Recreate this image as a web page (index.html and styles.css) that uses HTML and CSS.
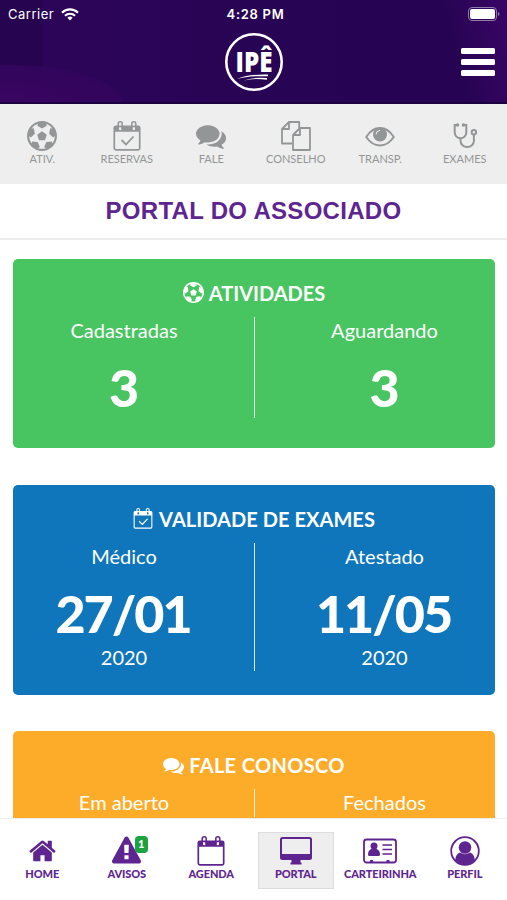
FILE: index.html
```html
<!DOCTYPE html>
<html lang="pt-BR">
<head>
    <meta charset="UTF-8">
    <meta name="viewport" content="width=device-width, initial-scale=1.0">
    <title>Portal do Associado</title>
    <link rel="stylesheet" href="styles.css">
</head>
<body>
    <!-- Icones usados mais de uma vez -->
    <svg class="sprite" width="0" height="0">
        <symbol id="ball" viewBox="0 0 1792 1792">
            <path d="M609 816l287-208 287 208-109 336h-355zm287-816q182 0 348 71t286 191 191 286 71 348-71 348-191 286-286 191-348 71-348-71-286-191-191-286-71-348 71-348 191-286 286-191 348-71zm619 1350q149-203 149-454v-3l-102 89-240-224 63-323 134 12q-150-206-389-282l53 124-287 159-287-159 53-124q-239 76-389 282l135-12 62 323-240 224-102-89v3q0 251 149 454l30-132 326 40 139 298-116 69q117 39 240 39t240-39l-116-69 139-298 326-40z"/>
        </symbol>
        <symbol id="calendar" viewBox="0 0 28 30">
            <rect x="1.300" y="5.300" width="25.400" height="23.500" rx="1.500" fill="none" stroke="currentColor" stroke-width="1.700"/>
            <path d="M1 6.500Q1 5 2.500 5H6v3a1.200 1.200 0 0 0 2.400 0V5h11.200v3a1.200 1.200 0 0 0 2.400 0V5h3.500Q27 5 27 6.500V10.800H1z"/>
            <path d="M5.200 8V2.800a2 2 0 0 1 4 0V8M18.800 8V2.800a2 2 0 0 1 4 0V8" fill="none" stroke="currentColor" stroke-width="1.500"/>
        </symbol>
        <symbol id="calendar-check" viewBox="0 0 28 30">
            <use href="#calendar" width="28" height="30"/>
            <path d="M8.500 19l4.500 4.500 7.500-8" fill="none" stroke="currentColor" stroke-width="1.800"/>
        </symbol>
        <symbol id="comments" viewBox="0 0 1792 1792">
            <path d="M1408 768q0 139-94 257t-256.500 186.500-353.500 68.500q-86 0-176-16-124 88-278 128-36 9-86 16h-3q-11 0-20.500-8t-11.500-21q-1-3-1-6.500t.5-6.500 2-6l2.500-5 3.500-5.500 4-5 4.500-5 4-4.500q5-6 23-25t26-29.500 22.500-29 25-38.500 20.500-44q-124-72-195-177t-71-224q0-139 94-257t256.500-186.500 353.500-68.500 353.500 68.500 256.500 186.500 94 257zm384 256q0 120-71 224.500t-195 176.500q10 24 20.500 44t25 38.500 22.500 29 26 29.500 23 25q1 1 4 4.500t4.500 5 4 5 3.500 5.500l2.500 5 2 6 .5 6.500-1 6.500q-3 14-13 22t-22 7q-50-7-86-16-154-40-278-128-90 16-176 16-271 0-472-132 58 4 88 4 161 0 309-45t264-129q125-92 192-212t67-254q0-77-23-152 129 71 204 178t75 230z"/>
        </symbol>
    </svg>

    <header class="header">
        <div class="status">
            <div class="carrier">
                <span>Carrier</span>
                <svg width="18" height="13" viewBox="0 0 18 13" fill="none" stroke="#fff" stroke-width="2.200">
                    <path d="M1 4.700a11.400 11.400 0 0 1 16 0"/>
                    <path d="M4 7.800a7.100 7.100 0 0 1 10 0"/>
                    <path d="M6.400 9.800a3.700 3.700 0 0 1 5.200 0L9 12.500z" fill="#fff" stroke="none"/>
                </svg>
            </div>
            <span class="time">4:28 PM</span>
            <svg class="battery" width="32" height="14" viewBox="0 0 32 14">
                <rect x=".5" y=".5" width="28" height="13" rx="3.500" fill="none" stroke="#8f7ba8"/>
                <rect x="2" y="2" width="25" height="10" rx="2" fill="#fff"/>
                <path d="M30 5v4q1.500-.5 1.500-2T30 5z" fill="#8f7ba8"/>
            </svg>
        </div>
        <div class="brand">
            <svg class="logo" width="60" height="60" viewBox="0 0 60 60">
                <circle cx="30" cy="30" r="27.700" fill="none" stroke="#fff" stroke-width="2.600"/>
                <text x="30" y="40" text-anchor="middle" textLength="37" lengthAdjust="spacingAndGlyphs">IPÊ</text>
                <path d="M13 47q10-5 31-4.500v1.800Q25 43.500 13 47zM20 48.500q8-3.500 23-2.500v1.800Q30 46 20 48.500z" fill="#fff"/>
            </svg>
            <button class="menu" type="button" aria-label="Menu"><span></span><span></span><span></span></button>
        </div>
    </header>

    <nav class="tabs">
        <a class="tab"><svg width="30" height="30"><use href="#ball"/></svg>ATIV.</a>
        <a class="tab"><svg width="28" height="30"><use href="#calendar-check"/></svg>RESERVAS</a>
        <a class="tab"><svg width="30" height="30"><use href="#comments"/></svg>FALE</a>
        <a class="tab">
            <svg width="30" height="30" viewBox="0 0 30 30" fill="none" stroke="currentColor" stroke-width="1.800" stroke-linejoin="round">
                <path d="M11 22.500H1V8l7-7h10.200v6M8 1v7H1"/>
                <path d="M12 14l7-7h10v22H12zM19 7v7h-7"/>
            </svg>CONSELHO</a>
        <a class="tab">
            <svg width="30" height="30" viewBox="0 0 30 30">
                <path d="M1.200 16Q7 7 15 7t13.800 9Q23 24.500 15 24.500T1.200 16z" fill="none" stroke="currentColor" stroke-width="1.900"/>
                <circle cx="15" cy="13.500" r="7"/>
                <path d="M11 13.500a4 4 0 0 1 4-4" fill="none" stroke="#eee" stroke-width="1"/>
            </svg>TRANSP.</a>
        <a class="tab">
            <svg width="30" height="30" viewBox="0 0 30 30" fill="none" stroke="currentColor" stroke-width="2">
                <path d="M7.500 4H4.700v7.500a5.800 5.800 0 0 0 11.600 0V4H13.500M10.500 17.300v2.500a6.700 6.200 0 0 0 13.400 0V13.500"/>
                <circle cx="23.900" cy="11.300" r="2.200"/>
                <circle cx="7.500" cy="4" r=".8"/>
                <circle cx="13.500" cy="4" r=".8"/>
            </svg>EXAMES</a>
    </nav>

    <h1>PORTAL DO ASSOCIADO</h1>

    <main class="cards">
        <section class="card green">
            <h2><svg width="21" height="21"><use href="#ball"/></svg>ATIVIDADES</h2>
            <div class="row">
                <div class="col">
                    <p>Cadastradas</p>
                    <strong>3</strong>
                </div>
                <div class="col">
                    <p>Aguardando</p>
                    <strong>3</strong>
                </div>
            </div>
        </section>

        <section class="card blue">
            <h2><svg width="20" height="21"><use href="#calendar-check"/></svg>VALIDADE DE EXAMES</h2>
            <div class="row">
                <div class="col">
                    <p>Médico</p>
                    <strong>27/01</strong>
                    <p>2020</p>
                </div>
                <div class="col">
                    <p>Atestado</p>
                    <strong>11/05</strong>
                    <p>2020</p>
                </div>
            </div>
        </section>

        <section class="card orange">
            <h2><svg width="21" height="21"><use href="#comments"/></svg>FALE CONOSCO</h2>
            <div class="row">
                <div class="col">
                    <p>Em aberto</p>
                </div>
                <div class="col">
                    <p>Fechados</p>
                </div>
            </div>
        </section>
    </main>

    <nav class="bottom">
        <a class="item">
            <svg width="29" height="29" viewBox="0 0 1792 1792"><path d="M1472 992v480q0 26-19 45t-45 19h-384v-384h-256v384h-384q-26 0-45-19t-19-45v-480q0-1 .5-3t.5-3l575-474 575 474q1 2 1 6zm223-69l-62 74q-8 9-21 11h-3q-13 0-21-7l-692-577-692 577q-12 8-24 7-13-2-21-11l-62-74q-8-10-7-23.500t11-21.500l719-599q32-26 76-26t76 26l244 204v-195q0-14 9-23t23-9h192q14 0 23 9t9 23v408l219 182q10 8 11 21.500t-7 23.500z"/></svg>
            HOME
        </a>
        <a class="item">
            <svg width="29" height="29" viewBox="0 0 1792 1792"><path d="M1024 1375v-190q0-14-9.500-23.500t-22.500-9.500h-192q-13 0-22.500 9.500t-9.500 23.500v190q0 14 9.500 23.500t22.500 9.500h192q13 0 22.500-9.500t9.500-23.500zm-2-374l18-459q0-12-10-19-13-11-24-11h-220q-11 0-24 11-10 7-10 21l17 457q0 10 10 16.500t24 6.500h185q14 0 23.500-6.500t10.500-16.500zm-14-934l768 1408q35 63-2 126-17 29-46.500 46t-63.500 17h-1536q-34 0-63.500-17t-46.500-46q-37-63-2-126l768-1408q17-31 47-49t65-18 65 18 47 49z"/></svg>
            <span class="badge">1</span>
            AVISOS
        </a>
        <a class="item"><svg width="28" height="30"><use href="#calendar"/></svg>AGENDA</a>
        <a class="item active">
            <svg width="32" height="29" viewBox="0 0 32 29"><path fill-rule="evenodd" d="M2.500.5h27A2.500 2.500 0 0 1 32 3v18a2.500 2.500 0 0 1-2.500 2.500H20.500V26h1v2h-11v-2h1v-2.500h-9A2.500 2.500 0 0 1 0 21V3A2.500 2.500 0 0 1 2.500.5zM2 3.200v14.300h28V3.200a.8.800 0 0 0-.8-.8H2.800a.8.800 0 0 0-.8.800z"/></svg>
            PORTAL
        </a>
        <a class="item">
            <svg width="34" height="29" viewBox="0 0 34 29">
                <rect x="1" y="3" width="32" height="23" rx="2.500" fill="none" stroke="currentColor" stroke-width="1.800"/>
                <circle cx="11" cy="9.500" r="3.500"/>
                <path d="M8.500 12.500h5q3.500 1 3.500 5.500 0 1.500-1.500 1.500h-9Q5 19.500 5 18q0-4.500 3.500-5.500zM7 23.500h3V26H7zM23.500 23.500h3V26h-3z"/>
                <path d="M19.500 8.500h9.500M19.500 13h9.500M19.500 17.500h9.500" fill="none" stroke="currentColor" stroke-width="1.700"/>
            </svg>
            CARTEIRINHA
        </a>
        <a class="item">
            <svg width="30" height="30" viewBox="0 0 30 30">
                <circle cx="15" cy="15" r="13.800" fill="none" stroke="currentColor" stroke-width="1.800"/>
                <circle cx="15" cy="11.500" r="6.300"/>
                <path d="M10 16.500q5 3.500 10 0 4.500 1.500 4.800 7.500a13.500 13.500 0 0 1-19.600 0q.3-6 4.800-7.500z"/>
            </svg>
            PERFIL
        </a>
    </nav>
</body>
</html>
```

FILE: styles.css
```css
* {
    box-sizing: border-box;
}
body {
    display: flex;
    flex-direction: column;
    height: 100vh;
    margin: 0;
    font-family: Lato, "Open Sans", sans-serif;
    background: #fff;
    overflow: hidden;
}
svg {
    flex: none;
}
svg:not([fill]) {
    fill: currentColor;
}
.sprite {
    display: block;
}
h1, h2, p {
    margin: 0;
}
.header {
    height: 104px;
    color: #fff;
    border-bottom: 2px solid #1d0042;
    background:
        radial-gradient(ellipse 125px 40px at 0 104px, #3a0561 0, #32055c 97%, transparent 100%),
        linear-gradient(75deg, transparent 88%, #3a0566 100%),
        linear-gradient(90deg, #27044f 0 41px, #2c0559 44px, #270453 70%);
}
.status {
    display: grid;
    grid-template-columns: 1fr auto 1fr;
    align-items: center;
    height: 28px;
    padding: 0 7px 0 8px;
    font-family: Inter, sans-serif;
    font-size: 13px;
}
.carrier {
    display: flex;
    align-items: center;
    gap: 7px;
    letter-spacing: .5px;
}
.time {
    padding-left: 3px;
    font-weight: 600;
    letter-spacing: .7px;
}
.battery {
    justify-self: end;
}
.brand {
    display: grid;
    grid-template-columns: 1fr 60px 1fr;
    align-items: center;
    padding: 4px 12px 0;
}
.logo {
    grid-column: 2;
}
.logo text {
    font: 800 29px "Open Sans", sans-serif;
    fill: #fff;
}
.menu {
    display: grid;
    gap: 5px;
    justify-self: end;
    width: 34px;
    padding: 0;
    border: 0;
    background: none;
}
.menu span {
    height: 6px;
    border-radius: 1.500px;
    background: #fff;
}
.tabs {
    display: grid;
    grid-template-columns: repeat(6, 1fr);
    height: 80px;
    padding-top: 17px;
    background: #eee;
    color: #939697;
}
.tab, .item {
    display: flex;
    flex-direction: column;
    align-items: center;
    font-size: 11px;
    line-height: 14px;
}
.tab svg {
    margin-bottom: 1px;
}
h1 {
    height: 56px;
    border-bottom: 2px solid #eee;
    font: bold 24px/54px "Liberation Sans", Arial, sans-serif;
    letter-spacing: .3px;
    text-align: center;
    color: #5e2590;
}
.cards {
    flex: 1;
    display: flex;
    flex-direction: column;
    min-height: 0;
    padding: 19px 12px 0 13px;
}
.card {
    padding-top: 20px;
    border-radius: 5px;
    color: #fff;
    overflow: hidden;
}
.green {
    height: 189px;
    margin-bottom: 37px;
    background: #48c561;
}
.blue {
    height: 210px;
    margin-bottom: 36px;
    background: #0f76bc;
}
.orange {
    flex: 1;
    border-radius: 5px 5px 0 0;
    background: #fdac2a;
}
h2 {
    display: flex;
    justify-content: center;
    align-items: center;
    gap: 5px;
    height: 27px;
    font-size: 20px;
    font-weight: 700;
}
.blue h2 {
    gap: 6px;
    letter-spacing: .05px;
}
.orange h2 {
    padding-top: 1px;
    letter-spacing: .35px;
}
.row {
    display: grid;
    grid-template-columns: 1fr 1fr;
    height: 100px;
    margin: 11px -19px 0;
}
.blue .row {
    height: 127px;
}
.orange .row {
    height: 28px;
}
.col {
    text-align: center;
}
.col + .col {
    border-left: 1.500px solid rgba(255, 255, 255, .85);
}
.col p {
    height: 27px;
    font-size: 20px;
    line-height: 26px;
}
.col strong {
    display: block;
    height: 74px;
    font-size: 52px;
    line-height: 86px;
    font-weight: 900;
}
.blue strong {
    padding-right: 2px;
    letter-spacing: -2px;
}
.bottom {
    display: grid;
    grid-template-columns: repeat(6, 1fr);
    align-items: start;
    height: 82px;
    padding-top: 13px;
    border-top: 1px solid #eee;
    background: #fff;
    color: #5e2590;
}
.item {
    position: relative;
    height: 57px;
    padding-top: 4px;
    font-weight: 900;
    letter-spacing: -.1px;
}
.item svg {
    height: 30px;
    margin-bottom: 1px;
}
.active {
    margin: 0 4px;
    padding-top: 3px;
    border: 1px solid #ddd;
    background: #eee;
}
.badge {
    position: absolute;
    top: 4px;
    left: 50%;
    width: 13px;
    height: 17px;
    margin-left: 8px;
    border-radius: 4px;
    background: #1ba33f;
    color: #fff;
    font-size: 11px;
    line-height: 16px;
    text-align: center;
}
```
